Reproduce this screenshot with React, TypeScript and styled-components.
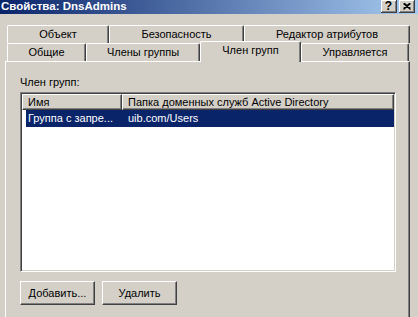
import React from "react";
import styled, { createGlobalStyle } from "styled-components";

const Global = createGlobalStyle`
  html, body { margin: 0; padding: 0; background: #d4d0c8; }
  body { font-family: "Liberation Sans", Arial, sans-serif; font-size: 11px; }
`;

const Window = styled.div`
  width: 418px;
  height: 317px;
  overflow: hidden;
  background: #d4d0c8;
  display: flex;
  flex-direction: column;
  font: 11px "Liberation Sans", Arial, sans-serif;
  color: #000;
`;

const TitleBar = styled.div`
  flex: none;
  height: 14px;
  display: flex;
  align-items: flex-start;
  padding: 0 3px 0 1px;
  background: linear-gradient(to right, #0a246a, #a6caf0);
`;

const Title = styled.div`
  flex: 1;
  color: #fff;
  font-weight: bold;
  font-size: 11.5px;
  line-height: 13px;
  white-space: nowrap;
`;

const CaptionButtons = styled.div`
  display: flex;
  gap: 2px;
`;

const CaptionButton = styled.div`
  width: 16px;
  height: 13px;
  box-sizing: border-box;
  background: #d4d0c8;
  border-right: 1px solid #404040;
  border-bottom: 1px solid #404040;
  box-shadow: inset 1px 1px 0 #fff, inset -1px -1px 0 #808080;
  display: flex;
  align-items: center;
  justify-content: center;
  font-weight: bold;
  font-size: 12px;
  line-height: 12px;
`;

const Body = styled.div`
  flex: 1;
  display: flex;
  flex-direction: column;
  padding-top: 11px;
`;

const TabRow = styled.div<{ $front?: boolean }>`
  display: flex;
  height: 18px;
  padding-left: 7px;
  align-items: flex-end;
  position: relative;
  z-index: ${(p) => (p.$front ? 2 : 1)};
`;

const Tab = styled.div<{ $w: number; $selected?: boolean }>`
  width: ${(p) => p.$w}px;
  height: ${(p) => (p.$selected ? 21 : 18)}px;
  margin-bottom: ${(p) => (p.$selected ? -1 : 0)}px;
  box-sizing: border-box;
  flex: none;
  background: #d4d0c8;
  border-top: 1px solid #fff;
  border-left: 1px solid #fff;
  border-right: 1px solid #404040;
  border-radius: 2px 2px 0 0;
  box-shadow: inset -1px 0 0 #808080;
  text-align: center;
  padding-top: 2px;
  line-height: 13px;
  white-space: nowrap;
  position: relative;
  z-index: ${(p) => (p.$selected ? 3 : 1)};
`;

const Panel = styled.div`
  flex: 1;
  margin-left: 5px;
  width: 405px;
  box-sizing: border-box;
  border-top: 1px solid #fff;
  border-left: 1px solid #fff;
  border-right: 1px solid #404040;
  box-shadow: inset -1px 0 0 #808080;
  padding: 14px 0 0 14px;
  display: flex;
  flex-direction: column;
  position: relative;
  z-index: 1;
`;

const Label = styled.div`
  line-height: 13px;
  height: 13px;
  margin-bottom: 3px;
`;

const ListView = styled.div`
  width: 376px;
  height: 180px;
  box-sizing: border-box;
  background: #fff;
  border-top: 1px solid #808080;
  border-left: 1px solid #808080;
  border-right: 1px solid #fff;
  border-bottom: 1px solid #fff;
  box-shadow: inset 1px 1px 0 #404040, inset -1px -1px 0 #d4d0c8;
  padding: 1px;
  display: flex;
  flex-direction: column;
`;

const Header = styled.div`
  display: flex;
  height: 16px;
  flex: none;
`;

const HeaderCell = styled.div<{ $w?: number }>`
  ${(p) => (p.$w ? `width: ${p.$w}px; flex: none;` : "flex: 1;")}
  box-sizing: border-box;
  background: #d4d0c8;
  border-top: 1px solid #fff;
  border-left: 1px solid #fff;
  border-right: 1px solid #404040;
  border-bottom: 1px solid #404040;
  box-shadow: inset -1px -1px 0 #808080;
  padding-left: 5px;
  line-height: 15px;
  white-space: nowrap;
  overflow: hidden;
`;

const Row = styled.div<{ $selected?: boolean }>`
  display: flex;
  height: 17px;
  margin-left: 4px;
  background: ${(p) => (p.$selected ? "#0a246a" : "transparent")};
  color: ${(p) => (p.$selected ? "#fff" : "#000")};
`;

const Cell = styled.div<{ $w?: number; $pad: number }>`
  ${(p) => (p.$w ? `width: ${p.$w}px; flex: none;` : "flex: 1;")}
  box-sizing: border-box;
  padding-left: ${(p) => p.$pad}px;
  line-height: 17px;
  white-space: nowrap;
  overflow: hidden;
`;

const ButtonRow = styled.div`
  display: flex;
  gap: 7px;
  margin-top: 9px;
`;

const Button = styled.div`
  width: 75px;
  height: 24px;
  box-sizing: border-box;
  background: #d4d0c8;
  border-top: 1px solid #fff;
  border-left: 1px solid #fff;
  border-right: 1px solid #404040;
  border-bottom: 1px solid #404040;
  box-shadow: inset -1px -1px 0 #808080;
  display: flex;
  align-items: center;
  justify-content: center;
  line-height: 13px;
`;

const CloseGlyph = () => (
  <svg width="8" height="7" viewBox="0 0 8 7">
    <path d="M0.5 0.5 L7.5 6.5 M1.5 0.5 L7.5 5.5 M7.5 0.5 L0.5 6.5 M6.5 0.5 L0.5 5.5" stroke="#000" strokeWidth="1.2" />
  </svg>
);

export default function App() {
  return (
    <>
      <Global />
      <Window>
        <TitleBar>
          <Title>Свойства: DnsAdmins</Title>
          <CaptionButtons>
            <CaptionButton>?</CaptionButton>
            <CaptionButton>
              <CloseGlyph />
            </CaptionButton>
          </CaptionButtons>
        </TitleBar>
        <Body>
          <TabRow>
            <Tab $w={102}>Объект</Tab>
            <Tab $w={135}>Безопасность</Tab>
            <Tab $w={166}>Редактор атрибутов</Tab>
          </TabRow>
          <TabRow $front>
            <Tab $w={79}>Общие</Tab>
            <Tab $w={114}>Члены группы</Tab>
            <Tab $w={101} $selected>
              Член групп
            </Tab>
            <Tab $w={108}>Управляется</Tab>
          </TabRow>
          <Panel>
            <Label>Член групп:</Label>
            <ListView>
              <Header>
                <HeaderCell $w={100}>Имя</HeaderCell>
                <HeaderCell>Папка доменных служб Active Directory</HeaderCell>
              </Header>
              <Row $selected>
                <Cell $w={96} $pad={2}>
                  Группа с запре...
                </Cell>
                <Cell $pad={6}>uib.com/Users</Cell>
              </Row>
            </ListView>
            <ButtonRow>
              <Button>Добавить...</Button>
              <Button>Удалить</Button>
            </ButtonRow>
          </Panel>
        </Body>
      </Window>
    </>
  );
}
